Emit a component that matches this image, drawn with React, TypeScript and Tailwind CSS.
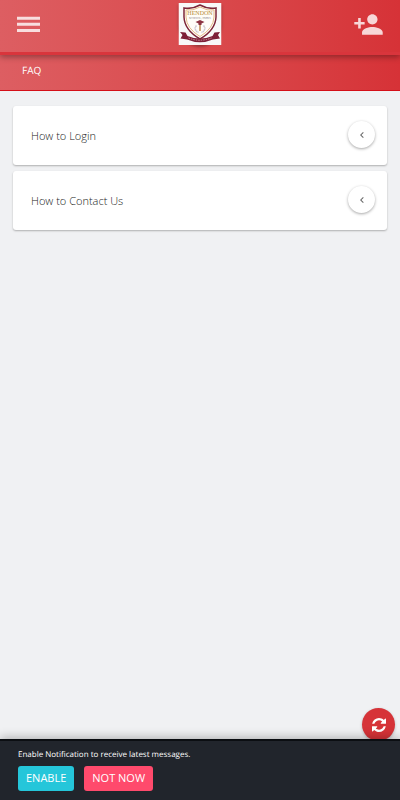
import { useState } from "react";
import { MdPersonAdd, MdChevronLeft } from "react-icons/md";

const faqs = [
  { id: "login", question: "How to Login", answer: "Tap the user icon and enter your details." },
  { id: "contact", question: "How to Contact Us", answer: "Open the menu and choose Contact Us." },
];

function SchoolLogo() {
  return (
    <svg viewBox="0 0 86 84" className="h-[42px] w-[43px]" role="img" aria-label="School logo">
      <rect width="86" height="84" fill="#f8f8f8" />
      <path d="M11 10 Q27 13 43 4 Q59 13 75 10 V28 Q74 54 43 72 Q12 54 11 28 Z" fill="#fffdf8" stroke="#7d2638" strokeWidth="3" />
      <path d="M15 14 Q29 16 43 8 Q57 16 71 14 V28 Q70 51 43 67 Q16 51 15 28 Z" fill="none" stroke="#e5b989" strokeWidth="2" />
      <text x="43" y="23" textAnchor="middle" fontSize="12" fill="#b5892f" fontFamily="'Liberation Serif', serif">
        HENDON
      </text>
      <text x="43" y="31" textAnchor="middle" fontSize="6" fill="#7a6f72" fontFamily="'Liberation Serif', serif">
        SCHOOL, INDIA
      </text>
      <path d="M34 38 L43 34 L52 38 L46 41 V44 H40 V41 Z" fill="#8c3341" />
      <path d="M43 44 V56" stroke="#c08a50" strokeWidth="3" />
      <path d="M36 45 Q29 53 40 59 M50 45 Q57 53 46 59" fill="none" stroke="#c9c4cf" strokeWidth="3" strokeDasharray="3 1" />
      <path d="M3 58 L14 59 L18 66 Q43 76 68 66 L72 59 L83 58 L79 64 L83 71 L69 73 Q43 84 17 73 L4 71 L8 64 Z" fill="#7d2038" />
      <path d="M20 70 Q43 79 66 70" fill="none" stroke="#c9929c" strokeWidth="2" strokeDasharray="3 2" />
    </svg>
  );
}

function MenuIcon() {
  return (
    <svg viewBox="0 0 30 30" className="size-[30px]" fill="currentColor" aria-hidden="true">
      <path d="M4 7.7h23v3H4z M4 13.8h23v3H4z M4 19.9h23v3H4z" />
    </svg>
  );
}

function RefreshIcon() {
  return (
    <svg viewBox="0 0 1536 1536" className="size-[14px]" fill="currentColor" aria-hidden="true">
      <path d="M1511 928q0 5-1 7-64 268-268 434.500t-478 166.500q-146 0-282.500-55t-243.500-157l-129 129q-19 19-45 19t-45-19-19-45v-448q0-26 19-45t45-19h448q26 0 45 19t19 45-19 45l-137 137q71 66 161 102t187 36q134 0 250-65t186-179q11-17 53-117 8-23 30-23h192q13 0 22.500 9.500t9.500 22.500z" />
      <path d="M1536 128v448q0 26-19 45t-45 19h-448q-26 0-45-19t-19-45 19-45l138-138q-148-137-349-137-134 0-250 65t-186 179q-11 17-53 117-8 23-30 23h-199q-13 0-22.500-9.500t-9.500-22.500v-7q65-268 270-434.500t480-166.500q146 0 284 55.500t245 156.500l130-129q19-19 45-19t45 19 19 45z" />
    </svg>
  );
}

function Header() {
  return (
    <header className="relative z-10 flex h-[55px] items-start justify-between border-b-3 border-[#d9353c] bg-linear-to-r from-[#dd5e62] to-[#d63237] pr-4 pl-[13px] shadow-[0_2px_6px_rgba(0,0,0,0.35)]">
      <button type="button" aria-label="Menu" className="mt-[9px] text-white/80">
        <MenuIcon />
      </button>
      <a href="#home" className="absolute top-[3px] left-1/2 -translate-x-1/2 rounded-b-full shadow-[0_2px_3px_rgba(0,0,0,0.3)]">
        <SchoolLogo />
      </a>
      <button type="button" aria-label="Add account" className="mt-[9px] text-white/80">
        <MdPersonAdd size={31} />
      </button>
    </header>
  );
}

function FaqItem({ id, question, answer }: { id: string; question: string; answer: string }) {
  const [open, setOpen] = useState(false);

  return (
    <li className="rounded-[3px] bg-white shadow-[0_1px_2px_rgba(0,0,0,0.28)]">
      <button
        type="button"
        aria-expanded={open}
        aria-controls={id}
        onClick={() => setOpen(!open)}
        className="flex w-full items-center justify-between pt-[15px] pr-3 pb-[17px] pl-[18px] text-left"
      >
        <span className="pt-[3px] text-[11px] font-light text-[#222]">{question}</span>
        <span className="flex size-[27px] items-center justify-center rounded-full bg-white text-[#666] shadow-[0_1px_3px_rgba(0,0,0,0.35)]">
          <MdChevronLeft size={12} className={open ? "-rotate-90" : ""} />
        </span>
      </button>
      {open && (
        <p id={id} className="px-[18px] pb-4 text-[11px] font-light text-[#222]">
          {answer}
        </p>
      )}
    </li>
  );
}

export default function App() {
  const [showPrompt, setShowPrompt] = useState(true);

  return (
    <div className="flex min-h-screen flex-col bg-[#f0f1f3] font-['Open_Sans',sans-serif] [text-rendering:geometricPrecision]">
      <Header />
      <div className="flex h-9 items-center border-b border-[#d40f18] bg-linear-to-r from-[#dd5e62] to-[#d63237] px-[22px] pb-1">
        <h1 className="text-[10px] text-white">FAQ</h1>
      </div>

      <main className="flex-1 px-[13px] pt-[15px]">
        <ul className="flex flex-col gap-[6px]">
          {faqs.map((faq) => (
            <FaqItem key={faq.id} {...faq} />
          ))}
        </ul>
      </main>

      <div className="sticky bottom-0">
        {/* Refresh button tucked behind the prompt */}
        <button
          type="button"
          aria-label="Refresh"
          className="absolute -top-[31px] right-[5px] flex size-[33px] items-center justify-center rounded-full bg-[#d63338] text-white shadow-[0_1px_3px_rgba(0,0,0,0.25)]"
        >
          <RefreshIcon />
        </button>
        {showPrompt && (
          <section className="relative border-t-2 border-[#0b0e12] bg-[#21252c] px-[18px] pt-[7px] pb-[9px] shadow-[0_-1px_10px_rgba(0,0,0,0.3)]">
            <p className="text-[8px] leading-[14px] text-white">Enable Notification to receive latest messages.</p>
            <div className="mt-1 flex gap-[10px] text-[11px] text-white">
              <button type="button" onClick={() => setShowPrompt(false)} className="h-[25px] rounded-[3px] bg-[#25c6da] px-2">
                ENABLE
              </button>
              <button type="button" onClick={() => setShowPrompt(false)} className="h-[25px] rounded-[3px] bg-[#ff4a6c] px-2">
                NOT NOW
              </button>
            </div>
          </section>
        )}
      </div>
    </div>
  );
}
